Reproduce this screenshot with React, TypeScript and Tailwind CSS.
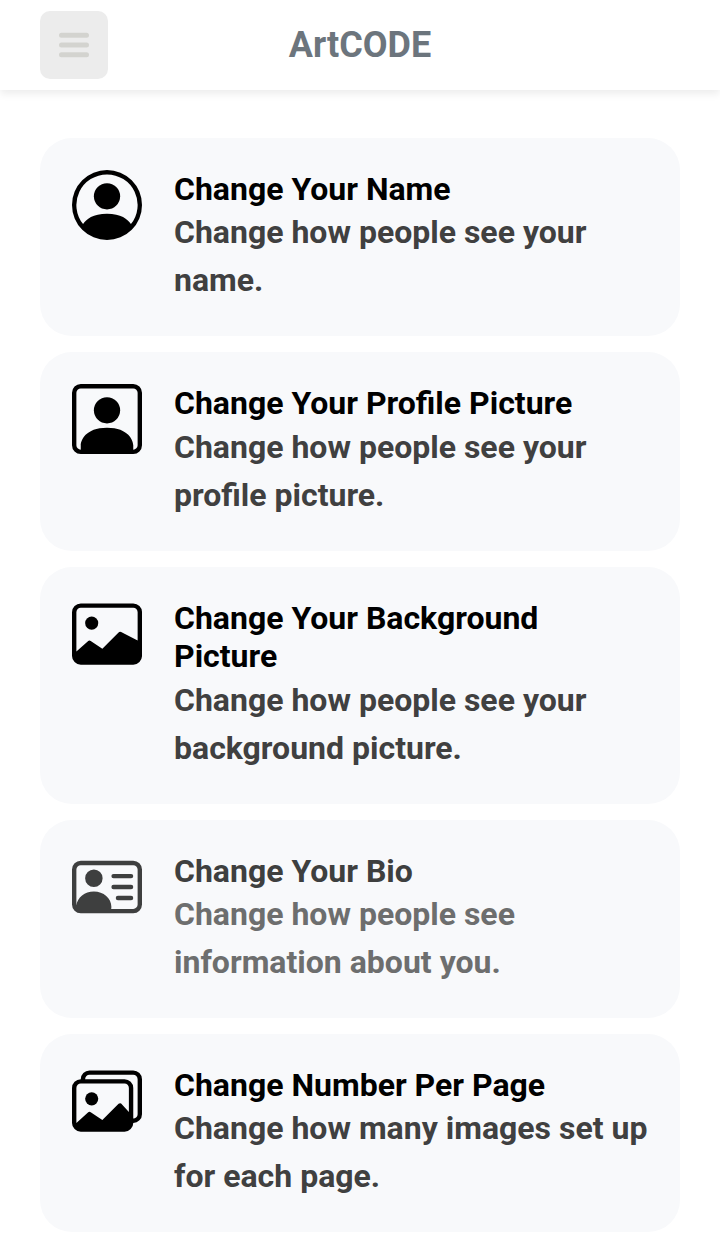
import type { IconType } from "react-icons";
import { BsImage, BsImages, BsPersonCircle, BsPersonSquare, BsPersonVcard } from "react-icons/bs";

type Setting = { icon: IconType; title: string; text: string; dimmed?: boolean };

const settings: Setting[] = [
  { icon: BsPersonCircle, title: "Change Your Name", text: "Change how people see your name." },
  { icon: BsPersonSquare, title: "Change Your Profile Picture", text: "Change how people see your profile picture." },
  { icon: BsImage, title: "Change Your Background Picture", text: "Change how people see your background picture." },
  { icon: BsPersonVcard, title: "Change Your Bio", text: "Change how people see information about you.", dimmed: true },
  { icon: BsImages, title: "Change Number Per Page", text: "Change how many images set up for each page." },
];

function Card({ icon: Icon, title, text, dimmed }: Setting) {
  return (
    <button className="flex items-start gap-8 rounded-[32px] bg-[#f8f9fb] p-8 text-left font-bold">
      <Icon className={dimmed ? "size-[70px] shrink-0 text-[#3e3f3f]" : "size-[70px] shrink-0 text-black"} />
      <div className="min-w-0 flex-1 text-[32px]">
        <h2 className={dimmed ? "leading-[38.4px] text-[#3e3f3f]" : "leading-[38.4px] text-black"}>{title}</h2>
        <p className={dimmed ? "leading-[48px] text-[#6d6e6e]" : "leading-[48px] text-[#404040]"}>{text}</p>
      </div>
    </button>
  );
}

export default function App() {
  return (
    <div className="h-[1244px] overflow-hidden bg-white font-['Roboto',sans-serif]">
      <header className="grid h-[90px] grid-cols-[68px_1fr_68px] items-center px-10 shadow-[0_4px_8px_rgba(0,0,0,0.075)]">
        <button aria-label="Menu" className="flex size-[68px] items-center justify-center rounded-[10px] bg-[#ececec]">
          <svg viewBox="0 0 30 26" className="h-[26px] w-[30px]" stroke="#d3d3cf" strokeWidth="5" strokeLinecap="round">
            <path d="M2.5 3.2H27.5M2.5 13H27.5M2.5 22.8H27.5" />
          </svg>
        </button>
        <h1 className="text-center text-[36px] leading-[44px] font-bold text-[#6c757d]">ArtCODE</h1>
      </header>
      <main className="flex flex-col gap-4 px-10 pt-12">
        {settings.map((s) => (
          <Card key={s.title} {...s} />
        ))}
      </main>
    </div>
  );
}
